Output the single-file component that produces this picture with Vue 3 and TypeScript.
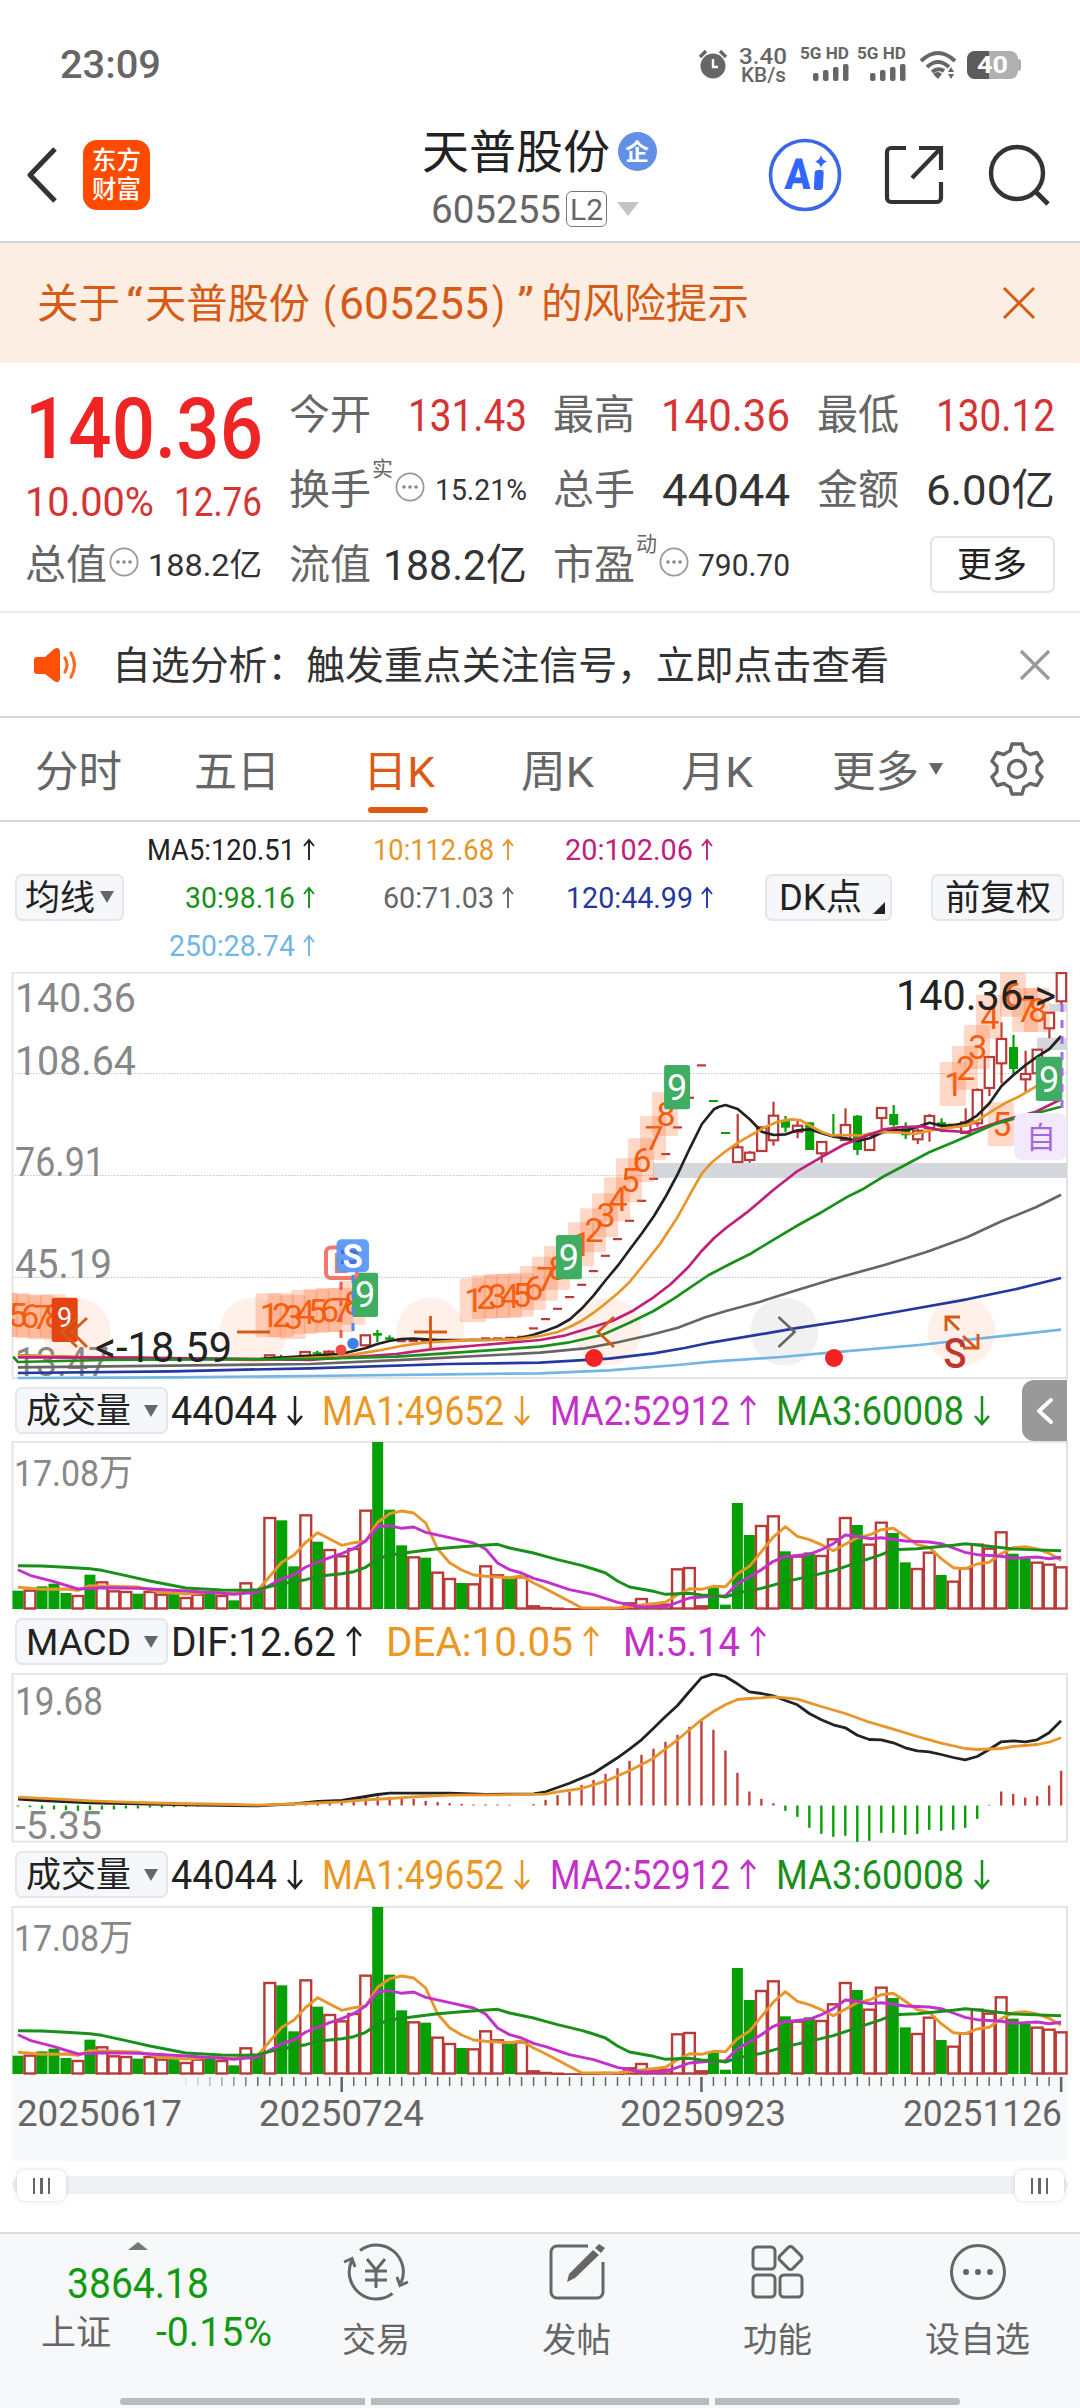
<script setup lang="ts">
import { h } from 'vue'

type Pt = [number, number]

const FONT = 'Roboto, "Noto Sans CJK SC", sans-serif'

/* One line of text set to an exact width; the box is as tall as its capitals. */
const Fit = (p: { t: string; w: number; s: number; c?: string; b?: number }) => {
  const H = Math.round(p.s * 0.711)
  return h('svg', { width: p.w, height: H, style: 'display:block;overflow:visible;flex:none' }, [
    h('text', {
      x: 0, y: H, 'font-size': p.s, 'font-weight': p.b ?? 400, 'font-family': FONT,
      fill: p.c ?? '#333', textLength: p.w, lengthAdjust: 'spacingAndGlyphs',
    }, p.t),
  ])
}
Fit.props = ['t', 'w', 's', 'c', 'b']

const Arrow = (p: { up?: boolean; c: string; big?: boolean }) => {
  const H = p.big ? 29 : 21
  const W = p.big ? 16 : 12
  const m = W / 2
  const d = p.up
    ? `M${m} ${H}V1M1 ${m + 1}L${m} 1L${W - 1} ${m + 1}`
    : `M${m} 0V${H - 1}M1 ${H - m - 1}L${m} ${H - 1}L${W - 1} ${H - m - 1}`
  return h('svg', { width: W, height: H, style: 'display:block;flex:none;overflow:visible' }, [
    h('path', { d, fill: 'none', stroke: p.c, 'stroke-width': p.big ? 2.5 : 1.9 }),
  ])
}
Arrow.props = { up: Boolean, big: Boolean, c: String }

const Dots = () => h('svg', { width: 30, height: 30, viewBox: '0 0 30 30', style: 'display:block;flex:none' }, [
  h('circle', { cx: 15, cy: 15, r: 13.6, fill: 'none', stroke: '#999', 'stroke-width': 1.8 }),
  ...[9, 15, 21].map((x) => h('circle', { cx: x, cy: 15, r: 1.8, fill: '#888' })),
])

const RED = '#ba3a38'
const GREEN = '#05a005'
const C = { k: '#222', o: '#e8952a', m: '#c0207c', g: '#1a8f1a', gr: '#666', b: '#2438a0', l: '#72b6e4', p: '#c430ca' }

const barX = (i: number) => 18 + i * 11.99
const poly = (a: Pt[]) => a.map((q) => q.join(',')).join(' ')

/* ---- volume ---- */
const vol = [55, 58, 68, 76, 48, 42, 103, 83, 56, 54, 46, 54, 46, 46, 36, 46, 46, 42, 26, 80, 56, 276, 266, 128, 284, 202, 180, 161, 183, 298, 501, 298, 191, 158, 154, 112, 93, 78, 77, 131, 104, 91, 98, 11, 6, 4, 2, 2, 2, 6, 2, 20, 33, 13, 16, 122, 126, 11, 63, 13, 318, 222, 252, 281, 173, 160, 170, 162, 212, 276, 252, 196, 262, 228, 140, 123, 172, 102, 85, 125, 196, 184, 233, 166, 150, 142, 136, 128]
const falling = new Set([0, 2, 3, 4, 6, 10, 13, 16, 18, 20, 22, 23, 25, 30, 31, 32, 34, 37, 41, 58, 59, 60, 61, 64, 66, 70, 73, 74, 77, 83, 84])
const volBars = vol.map((v, i) => ({ x: barX(i), v: v / 3, up: !falling.has(i) }))
const vma1: Pt[] = [[0, 65], [2, 59], [4, 60], [5, 56], [6, 70], [10, 66], [12, 50], [14, 45], [16, 50], [18, 47], [20, 56], [21, 98], [22, 140], [23, 161], [24, 200], [25, 229], [26, 210], [27, 191], [28, 199], [29, 204], [30, 260], [31, 286], [32, 294], [33, 288], [34, 258], [35, 180], [36, 139], [37, 117], [38, 102], [39, 98], [41, 94], [42, 99], [43, 78], [44, 61], [47, 4], [50, 3], [52, 12], [54, 20], [55, 43], [56, 61], [57, 59], [58, 68], [59, 67], [60, 106], [61, 128], [62, 172], [63, 216], [64, 247], [65, 218], [66, 208], [67, 193], [68, 175], [69, 194], [70, 214], [71, 222], [72, 238], [73, 242], [74, 218], [75, 193], [76, 185], [77, 151], [78, 124], [79, 121], [80, 135], [81, 140], [82, 166], [83, 184], [84, 187], [85, 180], [86, 167], [87, 146]]
const vma2: Pt[] = [[0, 118], [1, 101], [3, 82], [5, 60], [7, 64], [10, 62], [14, 54], [17, 47], [18, 44], [20, 51], [21, 71], [22, 91], [23, 102], [24, 126], [26, 154], [27, 166], [28, 181], [29, 204], [30, 247], [31, 250], [32, 242], [33, 246], [34, 230], [36, 214], [38, 198], [39, 180], [40, 138], [41, 118], [42, 108], [43, 92], [44, 82], [46, 58], [48, 43], [50, 20], [52, 6], [54, 7], [55, 20], [56, 33], [58, 39], [59, 40], [60, 76], [61, 96], [62, 118], [63, 143], [64, 157], [66, 164], [67, 178], [68, 196], [69, 222], [70, 218], [71, 211], [72, 214], [74, 204], [76, 201], [77, 196], [78, 183], [79, 170], [80, 163], [82, 158], [83, 152], [85, 156], [86, 151], [87, 155]]
const vma3: Pt[] = [[0, 130], [2, 129], [4, 125], [6, 121], [7, 116], [9, 100], [11, 84], [14, 63], [17, 57], [19, 56], [20, 58], [22, 76], [24, 88], [25, 98], [27, 106], [28, 112], [29, 125], [30, 150], [31, 162], [33, 172], [35, 181], [37, 187], [40, 194], [41, 183], [43, 168], [44, 158], [45, 148], [47, 131], [48, 120], [49, 108], [50, 84], [51, 66], [53, 53], [54, 44], [56, 47], [57, 42], [58, 41], [59, 36], [60, 48], [62, 62], [64, 82], [66, 98], [68, 115], [70, 139], [72, 163], [73, 178], [75, 181], [78, 191], [79, 196], [81, 188], [83, 180], [87, 175]]
const above = (a: Pt[], base: number) => poly(a.map(([i, v]) => [+barX(i).toFixed(1), +(base - v / 3).toFixed(1)]))
const volLines = [
  { c: C.o, p: above(vma1, 168) },
  { c: C.p, p: above(vma2, 168) },
  { c: C.g, p: above(vma3, 168) },
]

/* ---- MACD ---- */
const dif: Pt[] = [[0, 19], [2, 15], [6, 8], [10, 5], [14, 2], [18, 0], [20, -1], [23, 5], [25, 12], [27, 15], [28, 21], [29, 27], [30, 33], [31, 37], [36, 37], [39, 33], [43, 35], [44, 41], [46, 67], [48, 97], [49, 120], [50, 143], [51, 169], [52, 197], [53, 232], [54, 267], [55, 300], [56, 342], [57, 383], [58, 395], [59, 387], [60, 365], [61, 341], [62, 336], [63, 329], [64, 315], [65, 302], [66, 276], [67, 257], [68, 242], [69, 233], [70, 211], [71, 198], [72, 197], [73, 188], [74, 173], [75, 164], [76, 161], [77, 153], [78, 144], [79, 137], [80, 147], [81, 168], [82, 191], [83, 194], [84, 191], [85, 197], [86, 218], [87, 254]]
const dea: Pt[] = [[0, 25], [3, 20], [6, 14], [9, 10], [13, 6], [18, 3], [20, 1], [24, 6], [27, 11], [29, 17], [31, 21], [33, 26], [36, 31], [40, 32], [44, 34], [45, 41], [47, 51], [49, 73], [51, 104], [53, 142], [55, 197], [56, 227], [57, 257], [58, 282], [59, 302], [60, 318], [61, 321], [62, 323], [63, 326], [64, 323], [65, 319], [67, 297], [69, 276], [71, 250], [73, 229], [75, 207], [77, 187], [79, 171], [80, 168], [82, 171], [83, 177], [85, 183], [86, 190], [87, 203]]
const hist = [-3, -5, -10, -12, -14, -16, -14, -12, -12, -9, -9, -6, -6, -5, -4, -3, -2, -1, -1, 0, 1, 4, 7, 7, 10, 11, 12, 13, 18, 22, 27, 26, 23, 20, 14, 10, 7, 5, 3, 3, 3, 2, 0, 4, 17, 31, 42, 62, 77, 95, 112, 134, 152, 170, 191, 212, 236, 257, 227, 165, 98, 42, 20, 7, -16, -34, -67, -85, -94, -91, -109, -106, -82, -82, -88, -85, -73, -76, -73, -67, -40, 2, 42, 35, 24, 28, 60, 104]

/* ---- price chart: left and right halves share one grid, 1568 units per half ---- */
const HALF = 1568
const px = (x: number) => +(x / 2.9037).toFixed(1)
const py = (y: number) => +(960 + y / 3).toFixed(1)
const both = (l: Pt[], r: Pt[]) => poly([...l, ...r.map(([x, y]) => [x + HALF, y] as Pt)].map(([x, y]) => [px(x), py(y)]))
const lines = [
  { c: C.l, p: both([[52, 1254], [500, 1252], [900, 1248]], [[0, 1240], [200, 1231], [400, 1215], [500, 1205], [700, 1191], [850, 1177], [1100, 1155], [1300, 1133], [1513, 1109]]) },
  { c: C.b, p: both([[52, 1239], [500, 1234], [900, 1225], [1300, 1212]], [[0, 1208], [200, 1196], [330, 1180], [420, 1164], [500, 1147], [600, 1130], [740, 1105], [900, 1080], [1050, 1053], [1240, 1018], [1380, 988], [1513, 954]]) },
  { c: C.gr, p: both([[52, 1222], [500, 1217], [900, 1212], [1200, 1198]], [[0, 1178], [130, 1165], [230, 1146], [320, 1125], [400, 1103], [480, 1072], [540, 1053], [640, 1025], [740, 992], [850, 958], [1000, 915], [1120, 877], [1240, 832], [1340, 784], [1440, 742], [1513, 704]]) },
  { c: C.k, p: both([[52, 1186], [150, 1190], [330, 1194], [750, 1197], [887, 1188], [990, 1182], [1060, 1165], [1096, 1152], [1130, 1143], [1165, 1137], [1200, 1136], [1270, 1140], [1410, 1140], [1500, 1136], [1549, 1124]], [[17, 1112], [51, 1099], [87, 1078], [122, 1045], [156, 1006], [191, 960], [226, 917], [261, 868], [296, 820], [331, 768], [366, 708], [401, 640], [435, 565], [470, 492], [505, 448], [520, 440], [539, 435], [574, 447], [609, 478], [644, 515], [679, 525], [714, 523], [748, 511], [783, 508], [818, 520], [853, 530], [888, 535], [922, 543], [957, 535], [992, 518], [1027, 510], [1062, 512], [1097, 500], [1131, 488], [1166, 497], [1201, 496], [1236, 488], [1270, 466], [1305, 430], [1340, 378], [1375, 345], [1410, 315], [1444, 290], [1479, 267], [1513, 228]]) },
  { c: C.o, p: both([[52, 1186], [220, 1191], [750, 1200], [990, 1190], [1096, 1172], [1165, 1158], [1230, 1148], [1340, 1141], [1500, 1138]], [[0, 1128], [52, 1116], [87, 1100], [122, 1082], [156, 1058], [191, 1030], [226, 1000], [261, 965], [300, 915], [350, 850], [400, 770], [440, 695], [470, 640], [500, 606], [540, 573], [575, 548], [610, 527], [650, 503], [690, 485], [730, 478], [755, 480], [790, 500], [818, 516], [845, 526], [900, 525], [930, 527], [960, 520], [990, 516], [1040, 517], [1090, 522], [1130, 512], [1170, 506], [1240, 496], [1270, 482], [1310, 455], [1350, 430], [1390, 410], [1440, 380], [1479, 340]]) },
  { c: C.m, p: both([[52, 1192], [400, 1193], [900, 1200], [1150, 1182], [1250, 1168], [1400, 1155]], [[0, 1140], [70, 1127], [150, 1102], [210, 1083], [270, 1052], [330, 1012], [380, 972], [430, 922], [470, 872], [505, 835], [540, 804], [600, 758], [680, 688], [745, 635], [820, 590], [880, 555], [940, 530], [1000, 508], [1040, 502], [1110, 499], [1170, 512], [1240, 516], [1290, 500], [1350, 480], [1440, 455], [1513, 418]]) },
  { c: C.g, p: both([[38, 1190], [52, 1206], [300, 1200], [900, 1197], [1150, 1190], [1250, 1183]], [[0, 1160], [80, 1148], [180, 1125], [260, 1088], [330, 1053], [390, 1015], [440, 980], [490, 945], [550, 913], [610, 882], [680, 838], [750, 795], [820, 755], [890, 712], [940, 686], [1000, 648], [1070, 610], [1130, 577], [1200, 547], [1260, 520], [1320, 493], [1390, 472], [1440, 460], [1513, 440]]) },
]

/* [x, body top, body bottom, wick top, wick bottom, falling] */
type Candle = [number, number, number, number, number, number?]
const rightCandles: Candle[] = [
  [574, 562, 606, 462, 606], [609, 578, 600, 573, 608], [644, 502, 573, 502, 573], [678, 467, 541, 425, 557],
  [713, 483, 503, 468, 517, 1], [748, 497, 515, 480, 535], [783, 487, 570, 487, 570, 1], [818, 546, 580, 546, 608],
  [852, 524, 529, 462, 529, 1], [887, 495, 540, 445, 540], [922, 467, 570, 465, 585, 1], [957, 525, 570, 525, 570],
  [992, 444, 474, 444, 507], [1027, 462, 495, 435, 500, 1], [1062, 498, 526, 487, 537, 1], [1097, 512, 538, 505, 552],
  [1131, 468, 505, 462, 545], [1166, 487, 500, 475, 517, 1], [1201, 494, 500, 494, 500], [1236, 487, 519, 445, 522],
  [1270, 390, 490, 385, 500], [1305, 291, 384, 291, 408], [1340, 237, 310, 187, 370], [1375, 261, 327, 225, 343, 1],
  [1410, 342, 358, 272, 395], [1444, 269, 340, 269, 340], [1479, 158, 205, 158, 235], [1514, 39, 124, 39, 134],
]
const leftCandles: Candle[] = [
  [783, 1186, 1194, 1186, 1194], [816, 1189, 1194, 1184, 1198, 1], [886, 1176, 1187, 1176, 1187], [921, 1177, 1182, 1172, 1186, 1],
  [955, 1175, 1182, 1171, 1185], [1061, 1126, 1156, 1126, 1156], [1096, 1119, 1127, 1110, 1146, 1], [1131, 1132, 1139, 1126, 1145, 1],
]
const candles = [...leftCandles, ...rightCandles.map((c) => [c[0] + HALF, ...c.slice(1)] as Candle)].map((c) => ({
  x: px(c[0]), t: py(c[1]), b: py(c[2]), wt: py(c[3]), wb: py(c[4]), down: !!c[5],
}))
const limitUps: Pt[] = [
  [1165, 1143], [1200, 1143], [1235, 1143], [1270, 1142], [1305, 1142], [1340, 1141], [1375, 1139], [1410, 1135], [1445, 1135], [1480, 1133], [1515, 1130], [1549, 1105],
  ...([[16, 1077], [51, 1046], [86, 1011], [121, 974], [155, 933], [190, 887], [225, 837], [260, 782], [295, 722], [330, 656], [365, 582], [399, 502], [434, 413], [469, 316]] as Pt[]).map(([x, y]) => [x + HALF, y] as Pt),
]

const run = (x0: number, tops: number[], first = 1) =>
  tops.map((t, k) => ({ n: first + k, x: px(x0 + k * 34.85), y: py(t) }))
const counts = [
  ...run(14, [999, 999, 1003, 1006, 1003], 4),
  ...run(780, [1000, 1000, 1005, 990, 987, 984, 984, 962]),
  ...run(1373, [955, 945, 942, 942, 938, 918, 890, 858]),
  ...run(119 + HALF, [787, 745, 700, 652, 595, 535, 468, 396]),
  ...run(1199 + HALF, [306, 258, 195, 104, 427, 38, 84, 84]),
]
const nines = [
  { x: px(188), y: py(1013), c: '#e44312' },
  { x: px(1060), y: py(938), c: '#3fae62' },
  { x: px(84 + HALF), y: py(825), c: '#3fae62' },
  { x: px(398 + HALF), y: py(315), c: '#3fae62' },
]
const levels = [
  { t: '140.36', y: 1011.5, w: 121 }, { t: '108.64', y: 1075.3, w: 121 }, { t: '76.91', y: 1176, w: 90 },
  { t: '45.19', y: 1278, w: 97 }, { t: '13.47', y: 1375.7, w: 94 },
]

const ticks = Array.from({ length: 74 }, (_, k) => {
  const i = k + 14
  return { x: barX(i), major: i % 30 === 27, o: Math.min(1, (i - 13) / 7) }
})
const dates = [
  { t: '20250617', x: 17, w: 165 }, { t: '20250724', x: 259, w: 165 },
  { t: '20250923', x: 620, w: 166 }, { t: '20251126', x: 903, w: 159 },
]

const tabs = [
  { t: '分时', w: 87, x: 35 }, { t: '五日', w: 86, x: 194 }, { t: '日K', w: 72, x: 363, on: true },
  { t: '周K', w: 73, x: 521 }, { t: '月K', w: 72, x: 681 }, { t: '更多', w: 87, x: 832 },
].map((t, i, a) => ({ ...t, gap: i ? t.x - a[i - 1].x - a[i - 1].w : t.x }))

const volRow = [
  { t: '44044', w: 106, c: '#222', up: false, cell: 151 },
  { t: 'MA1:49652', w: 182, c: '#ea9724', up: false, cell: 228 },
  { t: 'MA2:52912', w: 180, c: C.p, up: true, cell: 226 },
  { t: 'MA3:60008', w: 188, c: C.g, up: false, cell: 215 },
]
const macdRow = [
  { t: 'DIF:12.62', w: 165, c: '#222', up: true, cell: 215 },
  { t: 'DEA:10.05', w: 187, c: '#ea9724', up: true, cell: 237 },
  { t: 'M:5.14', w: 117, c: C.p, up: true, cell: 160 },
]
const maCells = [
  { t: 'MA5:120.51', w: 148, c: '#222' }, { t: '10:112.68', w: 121, c: C.o }, { t: '20:102.06', w: 128, c: C.m },
  { t: '30:98.16', w: 110, c: C.g }, { t: '60:71.03', w: 111, c: '#666' }, { t: '120:44.99', w: 127, c: C.b },
  { t: '250:28.74', w: 126, c: C.l },
]
const panels = [
  { kind: 'vol', name: '成交量', row: volRow, toggle: true },
  { kind: 'macd', name: 'MACD', row: macdRow, toggle: false },
  { kind: 'vol', name: '成交量', row: volRow, toggle: false },
]
</script>

<template>
  <main class="app">
    <div class="status">
      <Fit t="23:09" :w="101" :s="38" c="#666" :b="500" class="clock" />
      <svg width="30" height="32" viewBox="0 0 30 32"><circle cx="15" cy="17" r="12.5" fill="#666" /><path d="M2 8L8 2M28 8L22 2" stroke="#666" stroke-width="3.4" /><path d="M15 10V18H20" fill="none" stroke="#fff" stroke-width="2.4" /></svg>
      <div class="speed">
        <Fit t="3.40" :w="48" :s="22" c="#666" :b="500" />
        <Fit t="KB/s" :w="45" :s="20" c="#666" :b="500" />
      </div>
      <div v-for="n in 2" :key="n" class="sim">
        <Fit t="5G HD" :w="49" :s="16" c="#666" :b="700" />
        <svg width="36" height="17"><rect v-for="k in 4" :key="k" :x="(k - 1) * 10" :y="11 - k * 3 + 1" width="5.5" :height="5 + k * 3" rx="2" fill="#666" /></svg>
      </div>
      <svg class="wifi" width="38" height="30" viewBox="0 0 38 30"><g fill="none" stroke="#666" stroke-width="4"><path d="M2 11Q19 -5 36 11" /><path d="M8 17Q19 7 30 17" /><path d="M13 22Q19 17 25 21" /></g><path d="M14 24Q19 20 23 24L19 29Z" fill="#666" /><path d="M29 22L32 17L35 22ZM29 24L32 29L35 24Z" fill="#666" /></svg>
      <svg width="54" height="28" viewBox="0 0 54 28"><rect width="51" height="28" rx="8" fill="#b0b0b0" /><path d="M8 0H22V28H8A8 8 0 0 1 0 20V8A8 8 0 0 1 8 0Z" fill="#5c5c5c" /><rect x="50" y="8" width="4" height="12" rx="2" fill="#b0b0b0" /><text x="10" y="22" textLength="31" lengthAdjust="spacingAndGlyphs" font-family="Roboto" font-weight="700" font-size="23" fill="#fff">40</text></svg>
    </div>

    <header class="head">
      <svg class="back" width="34" height="58" viewBox="0 0 34 58"><path d="M30 3L5 29L30 55" fill="none" stroke="#333" stroke-width="5" stroke-linejoin="round" /></svg>
      <div class="logo">
        <Fit t="东方" :w="49" :s="25" c="#fff" :b="500" />
        <Fit t="财富" :w="49" :s="25" c="#fff" :b="500" />
      </div>
      <div class="title">
        <div class="name">
          <Fit t="天普股份" :w="188" :s="46" c="#222" />
          <span class="corp"><Fit t="企" :w="24" :s="23" c="#fff" :b="700" /></span>
        </div>
        <div class="code">
          <Fit t="605255" :w="130" :s="38" c="#666" />
          <span class="l2"><Fit t="L2" :w="33" :s="30" c="#666" /></span>
          <i class="tri big"></i>
        </div>
      </div>
      <svg class="ai" width="74" height="74" viewBox="0 0 74 74"><circle cx="37" cy="37" r="34.5" fill="none" stroke="#3b68e8" stroke-width="3.6" /><text x="16" y="51.5" textLength="26" lengthAdjust="spacingAndGlyphs" font-family="Roboto" font-weight="900" font-size="43" fill="#3366ff" transform="skewX(-3) translate(3 0)">A</text><rect x="46.5" y="32" width="9" height="20" rx="2.5" fill="#36f" transform="skewX(-3) translate(2 0)" /><path d="M53 17Q54 22 59 23.5Q54 25 53 30Q52 25 47 23.5Q52 22 53 17Z" fill="#36f" /></svg>
      <svg class="share" width="60" height="60" viewBox="0 0 60 60"><path d="M22 3H7A4 4 0 0 0 3 7V53A4 4 0 0 0 7 57H53A4 4 0 0 0 57 53V37M35 3H57V25M56 4L28 33" fill="none" stroke="#333" stroke-width="4.2" /></svg>
      <svg width="64" height="64" viewBox="0 0 64 64"><circle cx="29" cy="30" r="26" fill="none" stroke="#333" stroke-width="4.4" /><path d="M47 48L60 61" stroke="#333" stroke-width="4.8" /></svg>
    </header>

    <section class="banner">
      <Fit t="关于" :w="83" :s="41" c="#d45c17" />
      <Fit class="q1" t="“" :w="17" :s="42" c="#d45c17" />
      <Fit t="天普股份" :w="165" :s="41" c="#d45c17" />
      <Fit class="p1" t="(" :w="13" :s="42" c="#d45c17" />
      <Fit class="p2" t="605255" :w="150" :s="44" c="#d45c17" />
      <Fit class="p2" t=")" :w="13" :s="42" c="#d45c17" />
      <Fit class="p3" t="”" :w="17" :s="42" c="#d45c17" />
      <Fit class="p4" t="的风险提示" :w="208" :s="41" c="#d45c17" />
      <svg class="close" width="34" height="34" viewBox="0 0 34 34"><path d="M2 2L32 32M32 2L2 32" stroke="#d45c17" stroke-width="3" /></svg>
    </section>

    <section class="quote">
      <div class="price">
        <Fit t="140.36" :w="238" :s="86" c="#ef2424" :b="500" />
        <div class="chg">
          <Fit t="10.00%" :w="129" :s="41" c="#d63333" />
          <Fit t="12.76" :w="88" :s="41" c="#d63333" />
        </div>
      </div>
      <div class="cell"><Fit t="今开" :w="82" :s="41" c="#666" /><Fit t="131.43" :w="119" :s="45" c="#d63333" /></div>
      <div class="cell"><Fit t="最高" :w="82" :s="41" c="#666" /><Fit t="140.36" :w="129" :s="45" c="#d63333" /></div>
      <div class="cell"><Fit t="最低" :w="82" :s="41" c="#666" /><Fit t="130.12" :w="119" :s="45" c="#d63333" /></div>
      <div class="cell"><Fit t="换手" :w="82" :s="41" c="#666" /><Fit class="sup" t="实" :w="21" :s="21" c="#666" /><Dots class="d" /><Fit class="end" t="15.21%" :w="92" :s="30" /></div>
      <div class="cell"><Fit t="总手" :w="82" :s="41" c="#666" /><Fit t="44044" :w="128" :s="45" /></div>
      <div class="cell"><Fit t="金额" :w="82" :s="41" c="#666" /><Fit t="6.00亿" :w="129" :s="43" /></div>
      <div class="cell"><Fit t="总值" :w="82" :s="41" c="#666" /><Dots class="g d" /><Fit class="end" t="188.2亿" :w="114" :s="32" /></div>
      <div class="cell"><Fit t="流值" :w="82" :s="41" c="#666" /><Fit t="188.2亿" :w="144" :s="43" /></div>
      <div class="cell"><Fit t="市盈" :w="82" :s="41" c="#666" /><Fit class="sup" t="动" :w="21" :s="21" c="#666" /><Dots class="d" /><Fit class="end" t="790.70" :w="92" :s="31" /></div>
      <div class="cell last"><span class="more"><Fit t="更多" :w="70" :s="35" c="#222" /></span></div>
    </section>

    <section class="notice">
      <svg width="46" height="38" viewBox="0 0 46 38"><path d="M4 11H12L21 3Q26 0 27 5V33Q26 38 21 35L12 28H4Q1 28 1 25V14Q1 11 4 11Z" fill="#ff5008" /><path d="M32 12Q36 19 32 26M38 7Q45 19 38 31" fill="none" stroke="#ff6a25" stroke-width="3.2" stroke-linecap="round" /></svg>
      <Fit class="msg" t="自选分析：触发重点关注信号，立即点击查看" :w="777" :s="38.8" />
      <svg class="close" width="32" height="32" viewBox="0 0 32 32"><path d="M2 2L30 30M30 2L2 30" stroke="#999" stroke-width="3.2" /></svg>
    </section>

    <nav class="tabs">
      <div v-for="t in tabs" :key="t.t" class="tab" :class="{ on: t.on }" :style="{ marginLeft: t.gap + 'px' }">
        <Fit :t="t.t" :w="t.w" :s="43" :c="t.on ? '#dd5a14' : '#666'" />
      </div>
      <i class="tri mid"></i>
      <svg class="gear" width="54" height="54" viewBox="0 0 54 54"><path d="M22 2H32L34 9Q37 10 40 12.5L47 10.5L52 19L47 24.5V29.5L52 35L47 43.5L40 41.5Q37 44 34 45L32 52H22L20 45Q17 44 14 41.5L7 43.5L2 35L7 29.5V24.5L2 19L7 10.5L14 12.5Q17 10 20 9Z" fill="none" stroke="#666" stroke-width="3.4" stroke-linejoin="round" /><circle cx="27" cy="27" r="8.5" fill="none" stroke="#666" stroke-width="3.4" /></svg>
    </nav>

    <section class="ma">
      <div class="btn b1"><Fit t="均线" :w="70" :s="35" c="#222" /><i class="tri mid"></i></div>
      <div class="ma-grid">
        <div v-for="m in maCells" :key="m.t" class="ma-cell"><Fit :t="m.t" :w="m.w" :s="29" :c="m.c" /><Arrow up :c="m.c" /></div>
      </div>
      <div class="btn b2"><Fit t="DK点" :w="83" :s="36" c="#222" /><i class="corner"></i></div>
      <div class="btn b3"><Fit t="前复权" :w="106" :s="35.5" c="#222" /></div>
    </section>

    <svg class="kline" width="1080" height="408" viewBox="0 972 1080 408">
      <defs><clipPath id="plot"><rect x="12" y="960" width="1057" height="420" /></clipPath></defs>
      <g stroke="#c4c4c4" stroke-width="1" stroke-dasharray="1.5 1.5"><path d="M12 1073.5H1067M12 1175.5H1067M12 1277.5H1067" /></g>
      <path d="M12.5 972.5H1067V1378H12.5Z" fill="none" stroke="#e2e2e2" stroke-width="1.8" />
      <g fill="#d4d7dc"><rect x="653" y="1163" width="414" height="15" /><rect x="1037" y="1037.7" width="30" height="12.3" /><rect x="1050" y="1004" width="17" height="7.7" /></g>
      <g font-family="Roboto" font-size="41.5" fill="#888"><text v-for="l in levels" :key="l.t" x="15" :y="l.y" :textLength="l.w" lengthAdjust="spacingAndGlyphs">{{ l.t }}</text></g>

      <g fill="#ff7026" fill-opacity="0.1"><circle cx="76.5" cy="1331.5" r="34" /><circle cx="253.5" cy="1331.5" r="34" /><circle cx="430.5" cy="1331.5" r="34" /><circle cx="607.5" cy="1331.5" r="34" /><circle cx="961.5" cy="1331.5" r="34" /></g>
      <circle cx="784.5" cy="1331.5" r="34" fill="#000" fill-opacity="0.055" />

      <g v-for="(c, i) in candles" :key="i">
        <path :d="`M${c.x} ${c.wt}V${c.wb}`" :stroke="c.down ? GREEN : RED" stroke-width="2.2" />
        <rect v-if="c.down" :x="c.x - 4.5" :y="c.t" width="9" :height="c.b - c.t" :fill="GREEN" />
        <rect v-else :x="c.x - 4.7" :y="c.t" width="9.4" :height="c.b - c.t" fill="#fff" :stroke="RED" stroke-width="2.2" />
      </g>
      <g :fill="RED"><rect v-for="(d, i) in limitUps" :key="i" :x="px(d[0]) - 4.5" :y="py(d[1]) - 1" width="9" height="2.2" /></g>
      <path d="M709 1101H718M721 1133H730" :stroke="GREEN" stroke-width="2.2" />

      <g clip-path="url(#plot)" text-anchor="middle" font-family="Roboto" font-size="34">
        <g v-for="(n, i) in counts" :key="i">
          <rect :x="n.x - 13" :y="n.y" width="26" height="44" rx="2" fill="#ff7030" fill-opacity="0.27" />
          <text :x="n.x + 1" :y="n.y + 34" fill="#f25c0c">{{ n.n }}</text>
        </g>
      </g>
      <g text-anchor="middle" font-family="Roboto">
        <g v-for="(n, i) in nines" :key="i"><rect :x="n.x - 13" :y="n.y" width="26" height="44.3" rx="2.5" :fill="n.c" /><text :x="n.x" :y="n.y + (i ? 34.5 : 29)" fill="#fff" :font-size="i ? 36 : 27">9</text></g>
      </g>

      <g fill="none" stroke-width="2.7" stroke-linejoin="round"><polyline v-for="l in lines" :key="l.c" :points="l.p" :stroke="l.c" /></g>

      <rect x="1035.8" y="1056.8" width="26.5" height="44.2" rx="2.5" fill="#3fae62" /><text x="1049" y="1091.5" text-anchor="middle" font-family="Roboto" font-size="36" fill="#fff">9</text>

      <rect x="326" y="1247.5" width="31" height="30.5" rx="5" fill="#fff" stroke="#f4766c" stroke-width="4" />
      <text x="333" y="1273" font-family="Roboto" font-weight="500" font-size="28" fill="#f4766c">L</text>
      <rect x="336.5" y="1239.3" width="32.5" height="33" rx="5" fill="#5898f8" fill-opacity="0.94" />
      <path d="M341 1252H358M341 1262H358" stroke="#4a70d8" stroke-width="4" />
      <text x="352.7" y="1267.5" text-anchor="middle" font-family="Roboto" font-weight="700" font-size="33" fill="#fff">S</text>
      <path d="M341 1282V1338" stroke="#ef5b4c" stroke-width="3" stroke-dasharray="8 8" />
      <path d="M353 1275V1331" stroke="#4c8af0" stroke-width="3" stroke-dasharray="8 8" />
      <circle cx="341" cy="1350" r="5.5" fill="#ef4d42" /><circle cx="353" cy="1343.5" r="5.7" fill="#3d7fec" />

      <g fill="none" stroke="#d45c17" stroke-width="2.9"><path d="M87 1318L72 1332L87 1347M77 1318L62 1332L77 1347M237 1332H270M414 1332H447M430.5 1316V1349M614 1317L598 1332L614 1347" /><path d="M960 1317H946V1331M946 1317L959 1330M963 1336L977 1349M978 1334V1348H963" /></g>
      <path d="M778.5 1317L794.5 1332L778.5 1347" fill="none" stroke="#666" stroke-width="2.6" />
      <circle cx="594" cy="1358" r="9" fill="#f02222" /><circle cx="834" cy="1358" r="9" fill="#f02222" />
      <text x="943.5" y="1368" textLength="23" lengthAdjust="spacingAndGlyphs" font-family="Roboto" font-size="42" font-weight="500" fill="#c2352f">S</text>

      <path d="M1062 1004V1108" stroke="#a66ee6" stroke-width="3" stroke-dasharray="8 8" />
      <rect x="1014" y="1113" width="53" height="47" rx="8" fill="#f3e9fd" />
      <text x="1041" y="1148" text-anchor="middle" font-family="Noto Sans CJK SC" font-size="30" fill="#a367dd">自</text>
      <g font-family="Roboto" font-size="42" fill="#222"><text x="95" y="1361.5" textLength="137" lengthAdjust="spacingAndGlyphs">&lt;-18.59</text><text x="896" y="1009.5" textLength="160" lengthAdjust="spacingAndGlyphs">140.36-&gt;</text></g>
    </svg>

    <section v-for="(p, n) in panels" :key="n" class="panel" :class="'panel' + n">
      <div class="legend">
        <div class="btn ind"><Fit :t="p.name" :w="105" :s="p.kind === 'vol' ? 35.5 : 37" c="#222" /><i class="tri mid"></i></div>
        <div v-for="r in p.row" :key="r.t" class="leg" :style="{ width: r.cell + 'px' }"><Fit :t="r.t" :w="r.w" :s="40" :c="r.c" /><Arrow big :up="r.up" :c="r.c" /></div>
        <div v-if="p.toggle" class="drawer"><svg width="18" height="28" viewBox="0 0 18 28"><path d="M15 3L3 14L15 25" fill="none" stroke="#fff" stroke-width="4" stroke-linecap="round" stroke-linejoin="round" /></svg></div>
      </div>
      <svg v-if="p.kind === 'vol'" width="1080" height="169" viewBox="0 0 1080 169">
        <path d="M12.5 168.5V.9H1067V168.5" fill="none" stroke="#e2e2e2" stroke-width="1.8" />
        <text x="14" y="45" textLength="119" lengthAdjust="spacingAndGlyphs" :font-family="FONT" font-size="37" fill="#888">17.08万</text>
        <g v-for="(b, i) in volBars" :key="i">
          <rect v-if="b.up" :x="b.x - 5.4" :y="168 - b.v + 1" width="10.8" :height="Math.max(b.v - 1.5, .5)" fill="#fff" :stroke="RED" stroke-width="2.4" />
          <rect v-else :x="b.x - 5.5" :y="168 - b.v" width="11" :height="b.v" :fill="GREEN" />
        </g>
        <g fill="none" stroke-width="2.9" stroke-linejoin="round"><polyline v-for="l in volLines" :key="l.c" :points="l.p" :stroke="l.c" /></g>
      </svg>
      <svg v-else width="1080" height="170" viewBox="0 0 1080 170">
        <path d="M12.5 .9H1067V168.7H12.5Z" fill="none" stroke="#e2e2e2" stroke-width="1.8" />
        <g font-family="Roboto" font-size="38" fill="#888"><text x="15" y="41.5" textLength="88" lengthAdjust="spacingAndGlyphs">19.68</text><text x="15" y="166" textLength="87" lengthAdjust="spacingAndGlyphs">-5.35</text></g>
        <path v-for="(v, i) in hist" :key="i" :d="`M${barX(i)} 132.5V${132.5 - v / 3}`" :stroke="v > 0 ? '#c0403c' : GREEN" stroke-width="2.4" />
        <g fill="none" stroke-width="2.8" stroke-linejoin="round"><polyline :points="above(dif, 132.5)" stroke="#222" /><polyline :points="above(dea, 132.5)" :stroke="C.o" /></g>
      </svg>
    </section>

    <svg class="axis" width="1080" height="86" viewBox="0 0 1080 86">
      <rect x="12" y="2" width="1056" height="84" fill="#f7f8fa" />
      <path v-for="(t, i) in ticks" :key="i" :d="`M${t.x} 2V${t.major ? 17 : 11}`" stroke="#666" :stroke-opacity="t.o" :stroke-width="t.major ? 2.6 : 1.5" />
      <g font-family="Roboto" font-size="37.5" fill="#666"><text v-for="d in dates" :key="d.t" :x="d.x" y="51" :textLength="d.w" lengthAdjust="spacingAndGlyphs">{{ d.t }}</text></g>
    </svg>

    <div class="slider">
      <div class="track"></div>
      <span class="grip"><i></i><i></i><i></i></span>
      <span class="grip r"><i></i><i></i><i></i></span>
    </div>

    <footer class="foot">
      <div class="index">
        <i class="tri up"></i>
        <Fit class="val" t="3864.18" :w="142" :s="42" c="#119a11" />
        <div class="sub"><Fit t="上证" :w="70" :s="35" c="#666" /><Fit t="-0.15%" :w="116" :s="40" c="#119a11" /></div>
      </div>
      <div class="item">
        <svg width="66" height="58" viewBox="0 0 66 58"><g fill="none" stroke="#666" stroke-width="3"><path d="M17 7.5A27 27 0 0 1 58 40M49.5 50.5A27 27 0 0 1 9 17" /><path d="M1 19L9 15.5L12 24M65 39L57 42.5L54 34" /><path d="M24 16L33 27L42 16M22 28H44M22 37H44M33 27V45" /></g></svg>
        <Fit t="交易" :w="68" :s="34.5" c="#666" />
      </div>
      <div class="item">
        <svg width="58" height="58" viewBox="0 0 58 58"><path d="M40 3H9A6 6 0 0 0 3 9V49A6 6 0 0 0 9 55H49A6 6 0 0 0 55 49V19" fill="none" stroke="#666" stroke-width="3" /><path d="M21 31L45 7L51 12L27 35L19 39ZM47 5L51 1L57 5L53 10Z" fill="#666" /></svg>
        <Fit t="发帖" :w="69" :s="34.5" c="#666" />
      </div>
      <div class="item">
        <svg width="56" height="58" viewBox="0 0 56 58"><g fill="none" stroke="#666" stroke-width="3"><rect x="4" y="4" width="22" height="22" rx="4" /><rect x="4" y="32" width="22" height="22" rx="4" /><rect x="31" y="32" width="22" height="22" rx="4" /><rect x="32.5" y="6" width="18" height="18" rx="3" transform="rotate(45 41.5 15)" /></g></svg>
        <Fit t="功能" :w="69" :s="34.5" c="#666" />
      </div>
      <div class="item">
        <svg width="58" height="58" viewBox="0 0 58 58"><circle cx="29" cy="29" r="26.5" fill="none" stroke="#666" stroke-width="3" /><g fill="#666"><circle cx="17" cy="29" r="3" /><circle cx="29" cy="29" r="3" /><circle cx="41" cy="29" r="3" /></g></svg>
        <Fit t="设自选" :w="105" :s="35" c="#666" />
      </div>
      <div class="home"><i></i><i></i><i></i></div>
    </footer>
  </main>
</template>

<style>
body { margin: 0; background: #fff; }
</style>

<style scoped>
.app { width: 1080px; height: 2408px; overflow: hidden; background: #fff; display: flex; flex-direction: column; font-family: Roboto, "Noto Sans CJK SC", sans-serif; }
.app > * { flex: none; box-sizing: border-box; }
svg { display: block; flex: none; }
i { display: block; flex: none; }

.status { height: 108px; padding: 21px 59px 0 60px; display: flex; align-items: center; }
.clock { margin-right: auto; }
.speed { display: flex; flex-direction: column; align-items: center; gap: 4px; margin: 0 13px 0 11px; }
.sim { display: flex; flex-direction: column; align-items: center; gap: 5px; margin-right: 8px; }
.sim svg + svg { margin-left: 12px; }
.wifi { margin: 0 10px 0 5px; }

.head { height: 135px; border-bottom: 2px solid #d6d6d6; padding: 0 28px 0 25px; display: flex; align-items: center; }
.back { margin-right: 24px; }
.logo { width: 68px; height: 70px; border-radius: 14px; background: #ff4a00; display: flex; flex-direction: column; align-items: center; justify-content: center; gap: 11px; }
.title { margin: 10px 0 0 272px; width: 250px; display: flex; flex-direction: column; gap: 20px; }
.name { display: flex; align-items: center; gap: 8px; }
.corp { width: 39px; height: 39px; border-radius: 50%; background: #6390e6; display: flex; align-items: center; justify-content: center; }
.code { display: flex; align-items: center; margin-left: 9px; }
.l2 { width: 39px; height: 34px; border: 1.5px solid #777; border-radius: 6px; margin-left: 5px; display: flex; align-items: center; justify-content: center; }
.tri { width: 0; height: 0; border-left: 7px solid transparent; border-right: 7px solid transparent; border-top: 12px solid #666; }
.tri.big { border-width: 14px 11px 0; border-top-color: #c4c4c4; margin-left: 10px; }
.tri.up { border-top: 0; border-bottom: 8px solid #777; border-left-width: 10px; border-right-width: 10px; }
.ai { margin-left: 100px; }
.share { margin: 0 44px 0 42px; }

.banner { height: 120px; background: #fdeee4; padding: 0 44px 0 37px; display: flex; align-items: center; }
.q1 { margin: 0 2px 0 6px; }
.p1 { margin-left: 13px; }
.p2 { margin-left: 3px; }
.p3 { margin-left: 12px; }
.p4 { margin-left: 7px; }
.close { margin-left: auto; }

.quote { height: 250px; border-bottom: 2px solid #ececec; padding: 14px 25px 0 25px; display: grid; grid-template-columns: 237px 238px 237px 238px; column-gap: 26.5px; grid-template-rows: 75px 75px 75px; }
.price { grid-row: 1 / span 2; padding-top: 20px; }
.chg { display: flex; justify-content: space-between; margin-top: 29px; }
.cell { display: flex; align-items: center; justify-content: space-between; }
.cell .sup { margin: -42px 2px 0 1px; }
.cell .d { margin-top: -6px; }
.cell .g { margin-left: 2px; }
.cell .end { margin-left: auto; }
.last { justify-content: flex-end; }
.more { width: 121px; height: 53px; border: 2px solid #e4e4e4; border-radius: 7px; display: flex; align-items: center; justify-content: center; }

.notice { height: 105px; border-bottom: 2px solid #d8d8d8; padding: 0 29px 0 33px; display: flex; align-items: center; }
.msg { margin-left: 33px; }

.tabs { height: 104px; border-bottom: 2px solid #d8d8d8; display: flex; align-items: center; }
.tab { height: 100%; padding-top: 5px; box-sizing: border-box; display: flex; align-items: center; position: relative; }
.tab.on::after { content: ""; position: absolute; left: 5px; width: 60px; bottom: 7px; height: 6px; border-radius: 3px; background: #dd5a14; }
.tabs .tri { margin-left: 10px; }
.gear { margin-left: 47px; }

.ma { height: 150px; padding-left: 15px; display: flex; align-items: center; }
.btn { height: 43px; border: 2px solid #e4e6ea; border-radius: 7px; background: #f6f7fa; display: flex; align-items: center; }
.b1 { width: 105px; gap: 5px; justify-content: center; }
.ma-grid { width: 591px; height: 144px; margin-top: 0; display: grid; grid-template-columns: 191px 199px 199px; grid-template-rows: repeat(3, 48px); }
.ma-cell { display: flex; align-items: center; justify-content: flex-end; gap: 8px; }
.b2 { width: 123px; margin-left: 50px; position: relative; }
.b2 > svg { margin-left: 12px; }
.corner { position: absolute; right: 5px; bottom: 5px; border-left: 12px solid transparent; border-bottom: 12px solid #222; }
.b3 { width: 129px; margin-left: 39px; justify-content: center; }

.legend { display: flex; align-items: center; padding-left: 15px; height: 100%; }
.panel { display: flex; flex-direction: column; }
.panel0 .legend { height: 61px; }
.panel1 .legend { height: 63px; }
.panel2 .legend { height: 63px; }
.ind { width: 149px; gap: 13px; justify-content: center; margin-right: 3px; }
.leg { display: flex; align-items: center; gap: 10px; }
.drawer { width: 45px; height: 61px; margin-left: 31px; border-radius: 12px 0 0 12px; background: #999; display: flex; align-items: center; justify-content: center; }

.slider { height: 71px; position: relative; padding-top: 15px; }
.track { height: 18px; margin: 0 12px; border-radius: 9px; background: #f0f1f4; }
.grip { position: absolute; top: 9px; left: 17px; width: 49px; height: 31px; border-radius: 8px; background: #fff; box-shadow: 0 0 5px rgba(0, 0, 0, .16); display: flex; align-items: center; justify-content: center; gap: 5px; }
.grip.r { left: 1015px; }
.grip i { width: 2.5px; height: 16px; background: #666; }

.foot { flex: 1 !important; background: #f6f8fa; border-top: 2px solid #d8dadd; display: flex; position: relative; }
.index { width: 276px; padding-top: 8px; display: flex; flex-direction: column; align-items: center; }
.val { margin-top: 18px; }
.sub { display: flex; align-items: center; gap: 45px; margin: 20px 0 0 36px; }
.item { width: 200.5px; padding-top: 9px; display: flex; flex-direction: column; align-items: center; gap: 26px; }
.home { position: absolute; left: 120px; bottom: 3px; width: 840px; display: flex; justify-content: space-between; }
.home i { height: 7px; background: #b9bbbd; width: 245px; border-radius: 4px 0 0 4px; }
.home i:nth-child(2) { width: 338px; border-radius: 0; }
.home i:nth-child(3) { border-radius: 0 4px 4px 0; }
</style>
